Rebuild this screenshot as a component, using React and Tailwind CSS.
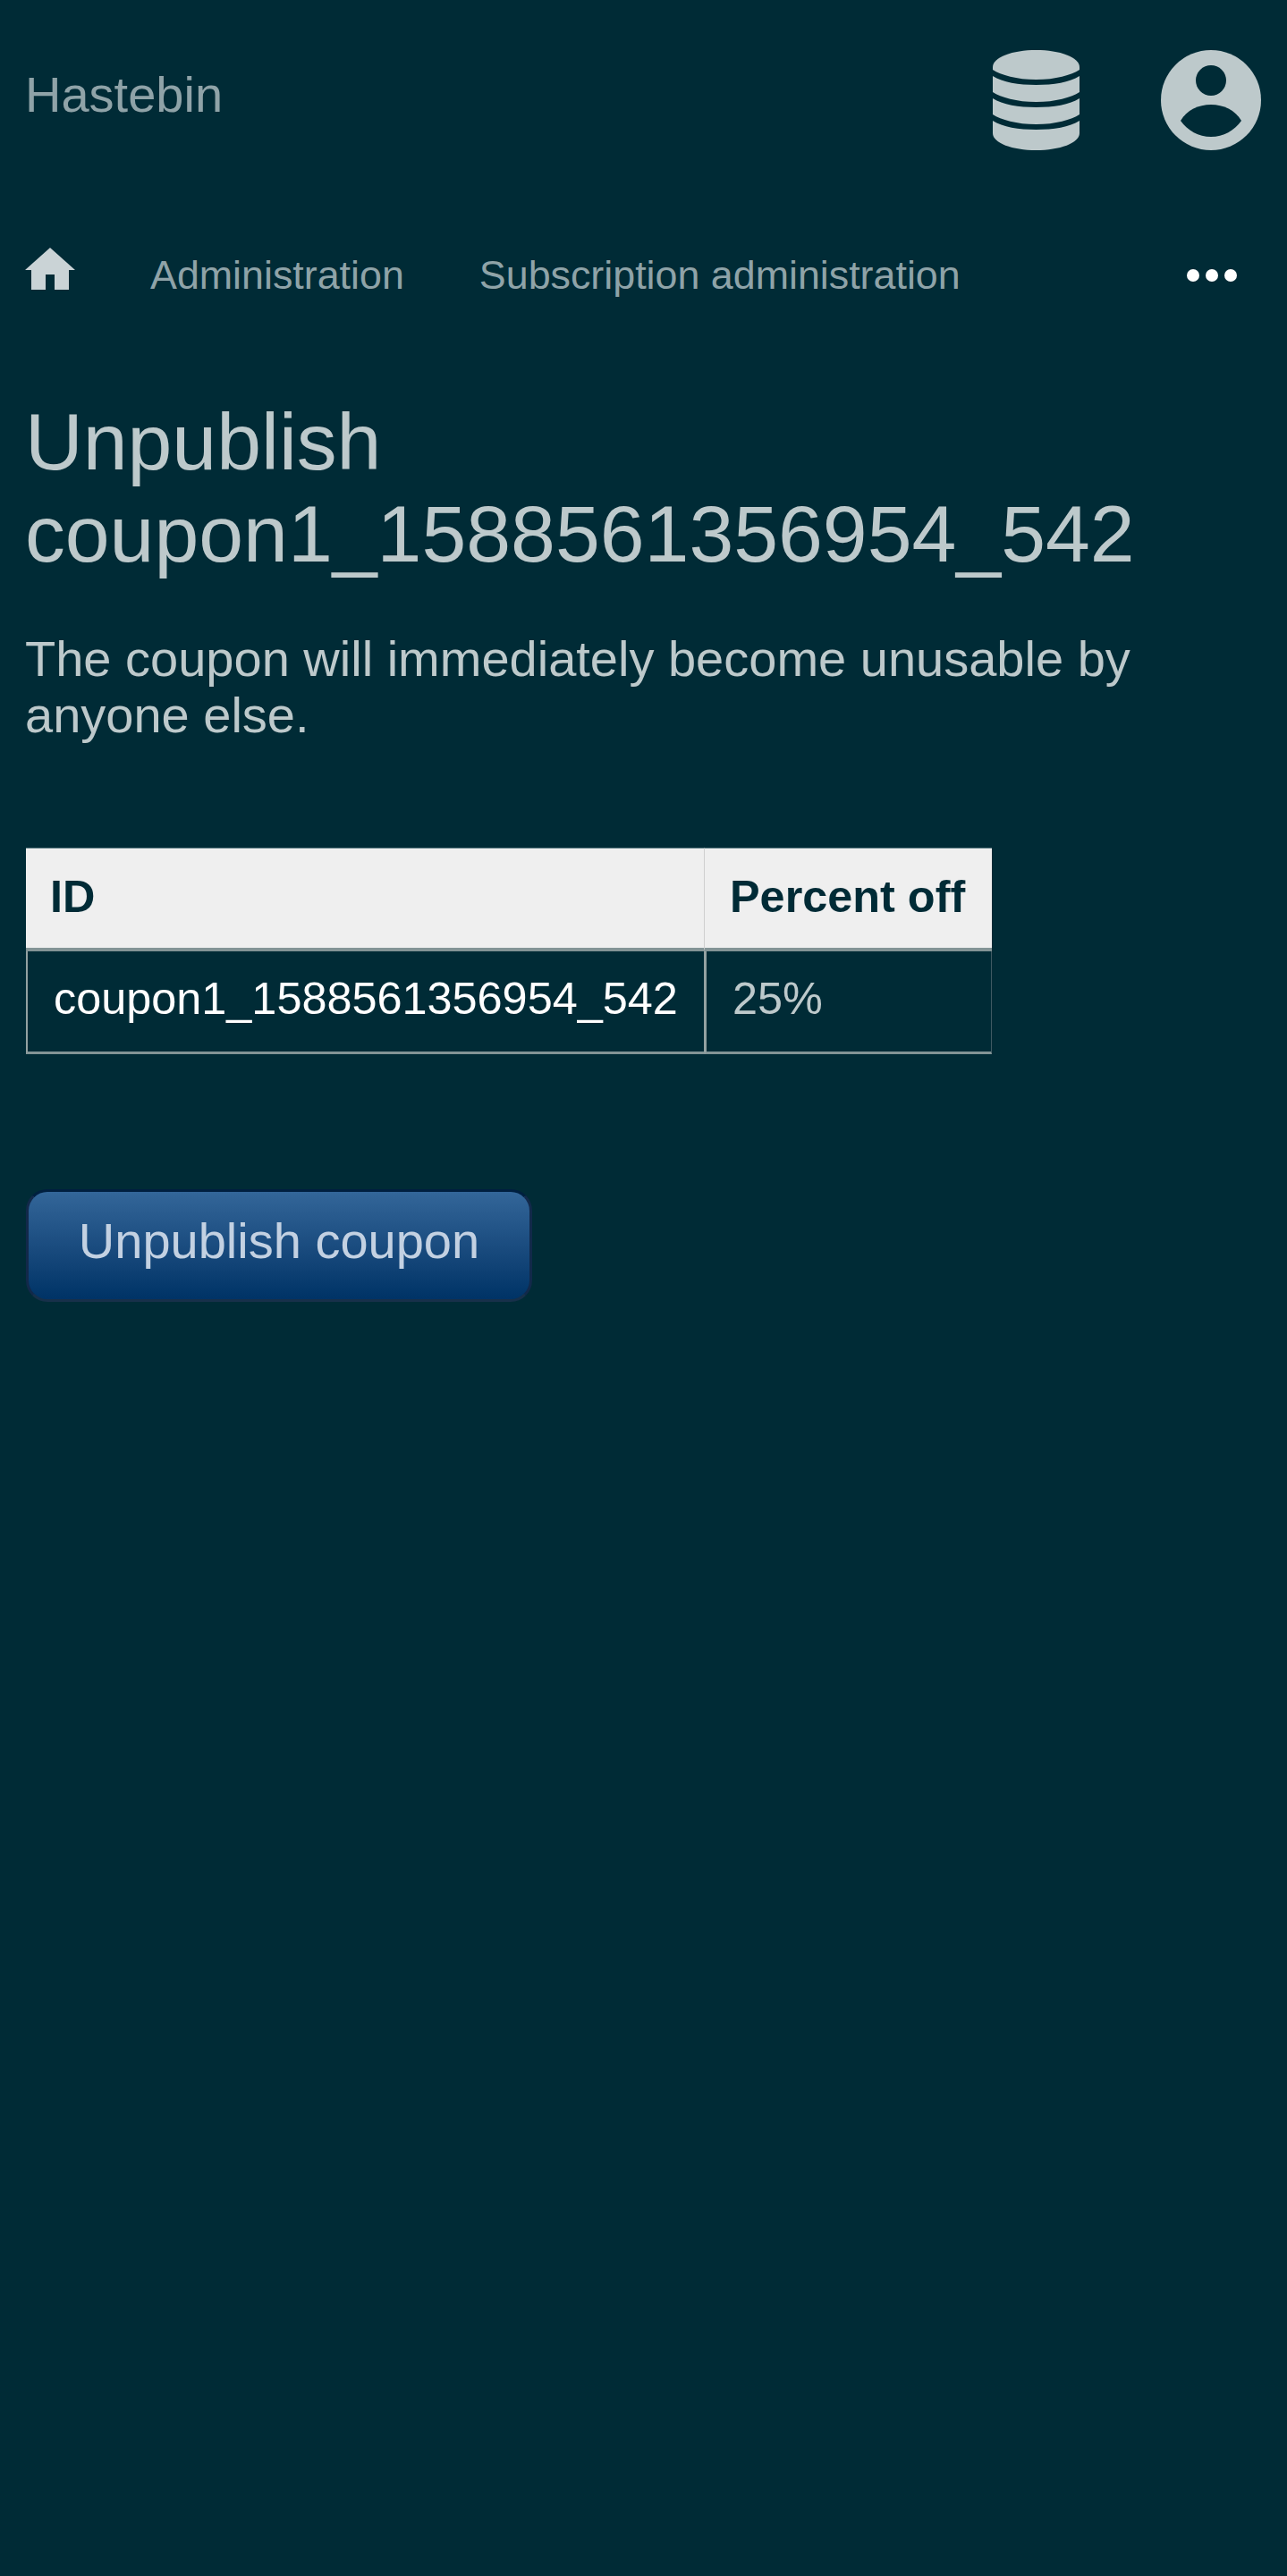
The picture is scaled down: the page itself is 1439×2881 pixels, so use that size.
import React from "react";

const Database = () => (
  <svg viewBox="0 0 97 112" className="w-[97px] h-[112px] fill-[#bdc9cb]">
    <path d="M0 19C0 8 22 0 48.500 0S97 8 97 19V22C88 28 70 33 48.500 33S9 28 0 22Z" />
    <path d="M0 29C11 36 29 39 48.500 39S86 36 97 29V47C88 53 70 58 48.500 58S9 53 0 47Z" />
    <path d="M0 54C11 61 29 64 48.500 64S86 61 97 54V72C88 78 70 83 48.500 83S9 78 0 72Z" />
    <path d="M0 79C11 86 29 89 48.500 89S86 86 97 79V93C97 104 75 112 48.500 112S0 104 0 93Z" />
  </svg>
);

const User = () => (
  <svg viewBox="0 0 112 112" className="w-[112px] h-[112px]">
    <circle cx="56" cy="56" r="56" fill="#bdc9cb" />
    <circle cx="56" cy="34" r="17" fill="#002b36" />
    <path d="M22 79C29 67 42 61 56 61S83 67 90 79C82 90 70 97 56 97S30 90 22 79Z" fill="#002b36" />
  </svg>
);

const Home = () => (
  <svg viewBox="0 0 56 48" className="w-[56px] h-[48px] fill-[#cad3d6]">
    <path d="M28 0L56 25H49V47H33V30H23V47H7V25H0Z" />
  </svg>
);

const App = () => {
  return (
    <div className="min-h-screen bg-[#002b36] text-[#bdc9cb] font-['Liberation_Sans',Arial,sans-serif]">
      <div className="flex justify-between pl-[28px] pr-[29px] pt-[56px]">
        <span className="text-[56px] leading-[64px] mt-[18px] text-[#8fa3a8]">Hastebin</span>
        <div className="flex items-center gap-[91px]">
          <Database />
          <User />
        </div>
      </div>

      <nav className="flex items-start pl-[28px] pr-[56px] mt-[109px]">
        <Home />
        <a className="ml-[84px] mt-[4px] text-[44.800px] leading-[52px] text-[#8fa3a8]">Administration</a>
        <a className="ml-[84px] mt-[4px] text-[44.800px] leading-[52px] text-[#8fa3a8]">Subscription administration</a>
        <div className="ml-auto mt-[24px] flex gap-[7px]">
          <span className="w-[14px] h-[14px] rounded-full bg-white" />
          <span className="w-[14px] h-[14px] rounded-full bg-white" />
          <span className="w-[14px] h-[14px] rounded-full bg-white" />
        </div>
      </nav>

      <main className="pl-[28px] pr-[29px]">
        <h1 className="mt-[110px] text-[89.600px] leading-[103px] font-normal">
          Unpublish
          <br />
          coupon1_1588561356954_542
        </h1>
        <p className="mt-[56px] text-[56px] leading-[63px]">
          The coupon will immediately become unusable by
          <br />
          anyone else.
        </p>

        <table className="mt-[117px] ml-px w-[1080px] border-separate border-spacing-0">
          <thead>
            <tr className="bg-[#efefef] text-[#002b36] text-[50.400px] font-bold text-left">
              <th className="h-[116px] w-[759px] pl-[27px] pb-[3px] border-t border-t-[#5f7f86] border-b-[4px] border-b-[#839496] border-r border-r-[#cfcfcf]">ID</th>
              <th className="h-[116px] pl-[28px] pb-[3px] border-t border-t-[#5f7f86] border-b-[4px] border-b-[#839496]">Percent off</th>
            </tr>
          </thead>
          <tbody>
            <tr className="text-[50.400px]">
              <td className="h-[115px] pl-[29px] pb-[6px] text-white border-l-[2px] border-l-[#93a1a1] border-r border-r-[#93a1a1] border-b-[3px] border-b-[#839496]">
                coupon1_1588561356954_542
              </td>
              <td className="h-[115px] pl-[29px] pb-[6px] border-l-[2px] border-l-[#93a1a1] border-r border-r-[#3f5a63] border-b-[3px] border-b-[#839496]">25%</td>
            </tr>
          </tbody>
        </table>

        <button className="mt-[151px] ml-px block w-[566px] h-[126px] rounded-[24px] border-[3px] border-t-[#001f3f] border-x-[#12294a] border-b-[#17304a] bg-gradient-to-b from-[#336699] to-[#003366] text-[56px] leading-[64px] text-[#c3d1e2] pb-[10px]">
          Unpublish coupon
        </button>
      </main>
    </div>
  );
};

export default App;
